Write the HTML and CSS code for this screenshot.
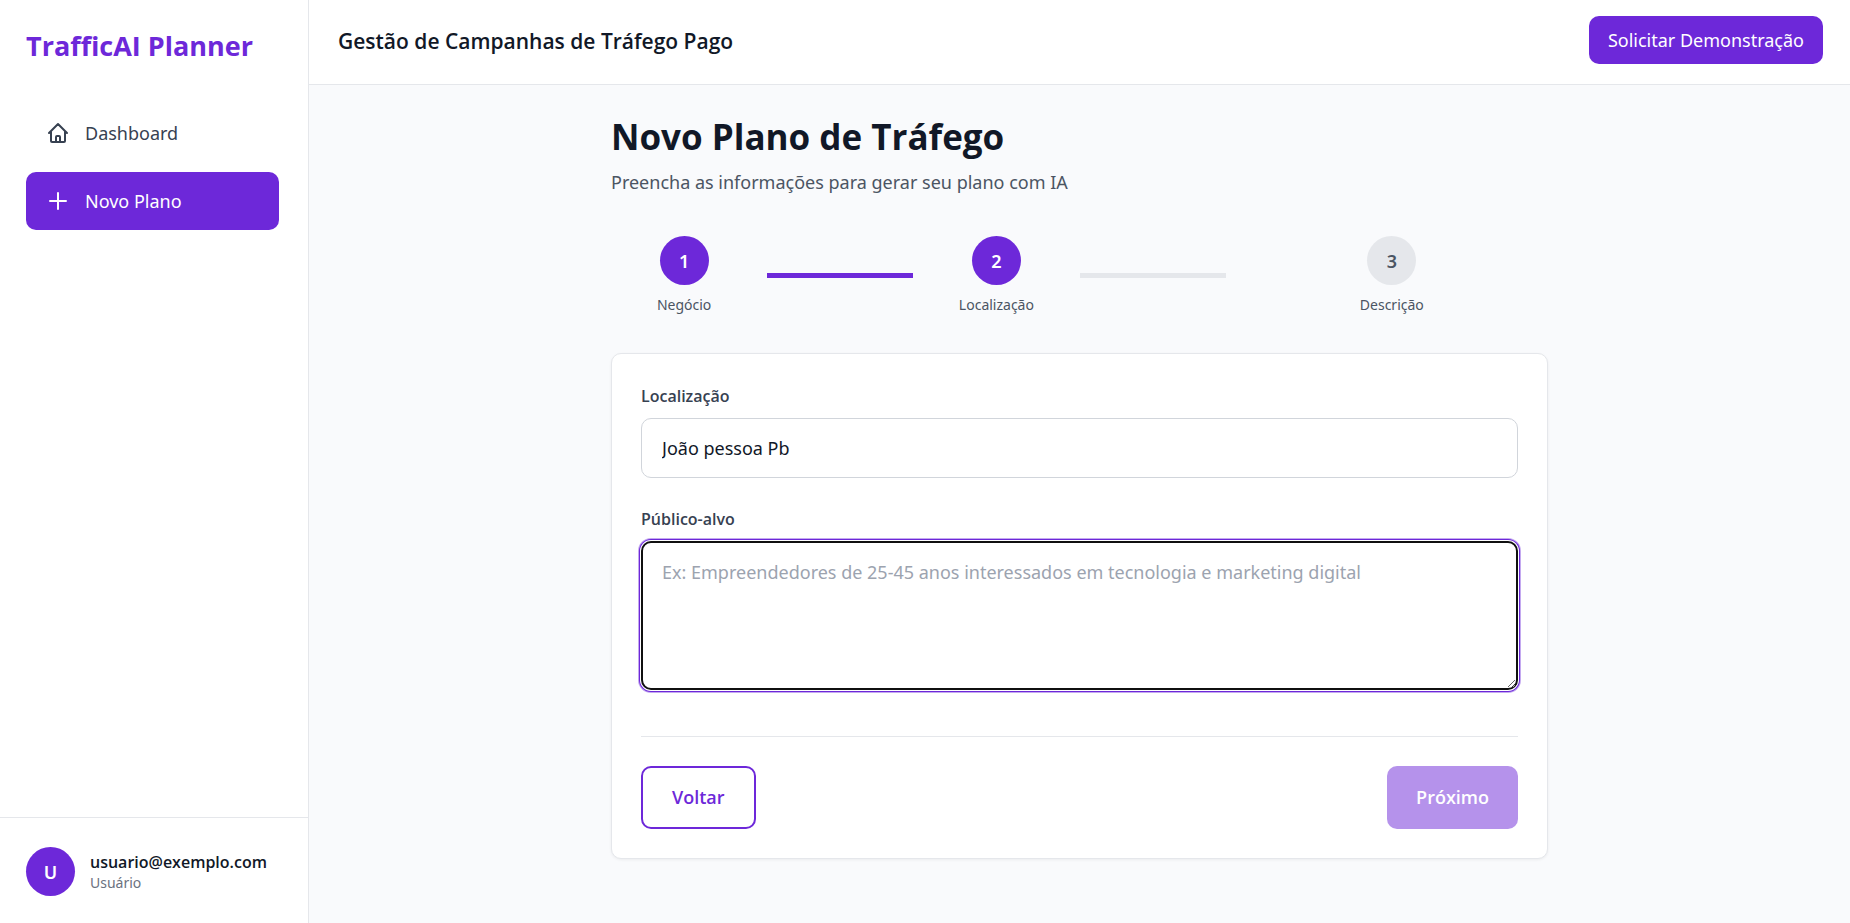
FILE: index.html
```html
<!DOCTYPE html>
<html lang="pt-BR">
<head>
    <meta charset="UTF-8">
    <meta name="viewport" content="width=device-width, initial-scale=1.0">
    <title>TrafficAI Planner</title>
    <link rel="stylesheet" href="styles.css">
</head>
<body>
  <aside class="sidebar">
    <div class="logo">TrafficAI Planner</div>

    <nav class="nav">
      <a class="nav-item" href="#">
        <svg class="icon" viewBox="0 0 24 24"><path d="M3 12l2-2m0 0l7-7 7 7M5 10v10a1 1 0 001 1h3m10-11l2 2m-2-2v10a1 1 0 01-1 1h-3m-6 0a1 1 0 001-1v-4a1 1 0 011-1h2a1 1 0 011 1v4a1 1 0 001 1m-6 0h6"/></svg>
        Dashboard
      </a>
      <a class="nav-item active" href="#">
        <svg class="icon" viewBox="0 0 24 24"><path d="M12 4v16m8-8H4"/></svg>
        Novo Plano
      </a>
    </nav>

    <div class="user">
      <div class="avatar">U</div>
      <div class="user-info">
        <div class="user-email">usuario@exemplo.com</div>
        <div class="user-role">Usuário</div>
      </div>
    </div>
  </aside>

  <div class="main">
    <header class="header">
      <h2>Gestão de Campanhas de Tráfego Pago</h2>
      <button class="btn-demo" type="button">Solicitar Demonstração</button>
    </header>

    <main class="content">
      <h1>Novo Plano de Tráfego</h1>
      <p class="subtitle">Preencha as informações para gerar seu plano com IA</p>

      <div class="steps">
        <div class="step">
          <div class="step-body">
            <div class="step-circle done">1</div>
            <span class="step-label">Negócio</span>
          </div>
          <div class="step-line done"></div>
        </div>
        <div class="step">
          <div class="step-body">
            <div class="step-circle done">2</div>
            <span class="step-label">Localização</span>
          </div>
          <div class="step-line"></div>
        </div>
        <div class="step">
          <div class="step-body">
            <div class="step-circle">3</div>
            <span class="step-label">Descrição</span>
          </div>
        </div>
      </div>

      <form class="card">
        <label for="local">Localização</label>
        <input id="local" type="text" value="João pessoa Pb">

        <label for="publico">Público-alvo</label>
        <textarea id="publico" placeholder="Ex: Empreendedores de 25-45 anos interessados em tecnologia e marketing digital"></textarea>

        <div class="actions">
          <button class="btn btn-outline" type="button">Voltar</button>
          <button class="btn btn-primary" type="submit" disabled>Próximo</button>
        </div>
      </form>
    </main>
  </div>
</body>
</html>
```
FILE: styles.css
```css
* {
  box-sizing: border-box;
  margin: 0;
  padding: 0;
}

body {
  display: flex;
  min-height: 100vh;
  font-family: "Noto Sans", "Open Sans", sans-serif;
  font-size: 18px;
  line-height: 28px;
  color: #111827;
  background-color: #f9fafc;
}

button, input, textarea {
  font: inherit;
  color: inherit;
}

/* sidebar */
.sidebar {
  display: flex;
  flex-direction: column;
  flex: none;
  width: 309px;
  background-color: #fff;
  border-right: 1px solid #e5e7eb;
}

.logo {
  padding: 27px 26px 39px;
  font-family: "Open Sans", sans-serif;
  font-size: 27px;
  line-height: 38px;
  font-weight: 700;
  color: #6d28d9;
}

.nav {
  display: flex;
  flex-direction: column;
  gap: 10px;
  padding: 0 29px 0 26px;
}

.nav-item {
  display: flex;
  align-items: center;
  gap: 15px;
  padding: 15px 20px;
  border-radius: 10px;
  color: #374151;
  text-decoration: none;
}

.nav-item.active {
  color: #fff;
  background-color: #6d28d9;
}

.icon {
  width: 24px;
  height: 24px;
  fill: none;
  stroke: currentColor;
  stroke-width: 2;
  stroke-linecap: round;
  stroke-linejoin: round;
}

.user {
  display: flex;
  align-items: center;
  gap: 15px;
  margin-top: auto;
  padding: 29px 26px 27px;
  border-top: 1px solid #e5e7eb;
}

.avatar, .step-circle {
  display: flex;
  align-items: center;
  justify-content: center;
  width: 49px;
  height: 49px;
  border-radius: 50%;
  font-weight: 600;
}

.avatar {
  color: #fff;
  background-color: #6d28d9;
}

.user-email {
  font-family: "Open Sans", sans-serif;
  font-size: 16px;
  line-height: 22px;
  font-weight: 600;
}

.user-role {
  font-size: 14px;
  line-height: 20px;
  color: #6b7280;
}

/* header */
.main {
  flex: 1;
  min-width: 0;
}

.header {
  display: flex;
  align-items: flex-start;
  justify-content: space-between;
  padding: 16px 27px 18px 29px;
  background-color: #fff;
  border-bottom: 1px solid #e5e7eb;
}

.header h2 {
  font-family: "Open Sans", sans-serif;
  font-size: 21px;
  line-height: 50px;
  font-weight: 600;
}

.btn-demo {
  padding: 10px 19px;
  border: none;
  border-radius: 10px;
  color: #fff;
  background-color: #6d28d9;
  cursor: pointer;
}

/* content */
.content {
  max-width: 937px;
  margin: 0 auto;
  padding: 28px 0;
}

h1 {
  font-family: "Open Sans", sans-serif;
  font-size: 35px;
  line-height: 48px;
  font-weight: 700;
}

.subtitle {
  margin-top: 7px;
  color: #4b5563;
}

.steps {
  display: flex;
  margin: 40px 0 38px;
}

.step {
  display: flex;
  flex: 1;
  align-items: center;
}

.step-body {
  display: flex;
  flex: 1;
  flex-direction: column;
  align-items: center;
}

.step-circle {
  color: #4b5563;
  background-color: #e5e7eb;
}

.step-circle.done {
  color: #fff;
  background-color: #6d28d9;
}

.step-label {
  margin-top: 10px;
  font-size: 14px;
  line-height: 20px;
  color: #4b5563;
}

.step-line {
  flex: 1;
  height: 5px;
  margin: 0 10px;
  background-color: #e5e7eb;
}

.step-line.done {
  background-color: #6d28d9;
}

/* form */
.card {
  padding: 29px;
  background-color: #fff;
  border: 1px solid #e5e7eb;
  border-radius: 10px;
  box-shadow: 0 1px 3px rgba(0, 0, 0, 0.06);
}

.card label {
  display: block;
  margin-bottom: 8px;
  font-family: "Open Sans", sans-serif;
  font-size: 16px;
  line-height: 27px;
  font-weight: 600;
  color: #374151;
}

input, textarea {
  display: block;
  width: 100%;
  border: 1px solid #d1d5db;
  border-radius: 10px;
  background-color: #fff;
  outline: none;
}

input {
  height: 60px;
  margin-bottom: 28px;
  padding: 0 20px;
}

textarea {
  height: 149px;
  padding: 15px 19px;
  border: 2px solid #101010;
  box-shadow: 0 0 0 1px #fff, 0 0 0 2px #6d28d9, 0 0 0 3px #c4a9f0;
  resize: vertical;
}

textarea::placeholder {
  color: #9ca3af;
}

.actions {
  display: flex;
  justify-content: space-between;
  margin-top: 46px;
  padding-top: 29px;
  border-top: 1px solid #e5e7eb;
}

.btn {
  padding: 15px 29px;
  border: 2px solid #6d28d9;
  border-radius: 10px;
  font-family: "Open Sans", sans-serif;
  line-height: 29px;
  font-weight: 600;
  cursor: pointer;
}

.btn-outline {
  color: #6d28d9;
  background-color: #fff;
}

.btn-primary {
  padding: 17px 29px;
  border: none;
  color: #fff;
  background-color: #6d28d9;
}

.btn:disabled {
  opacity: 0.5;
  cursor: not-allowed;
}
```
